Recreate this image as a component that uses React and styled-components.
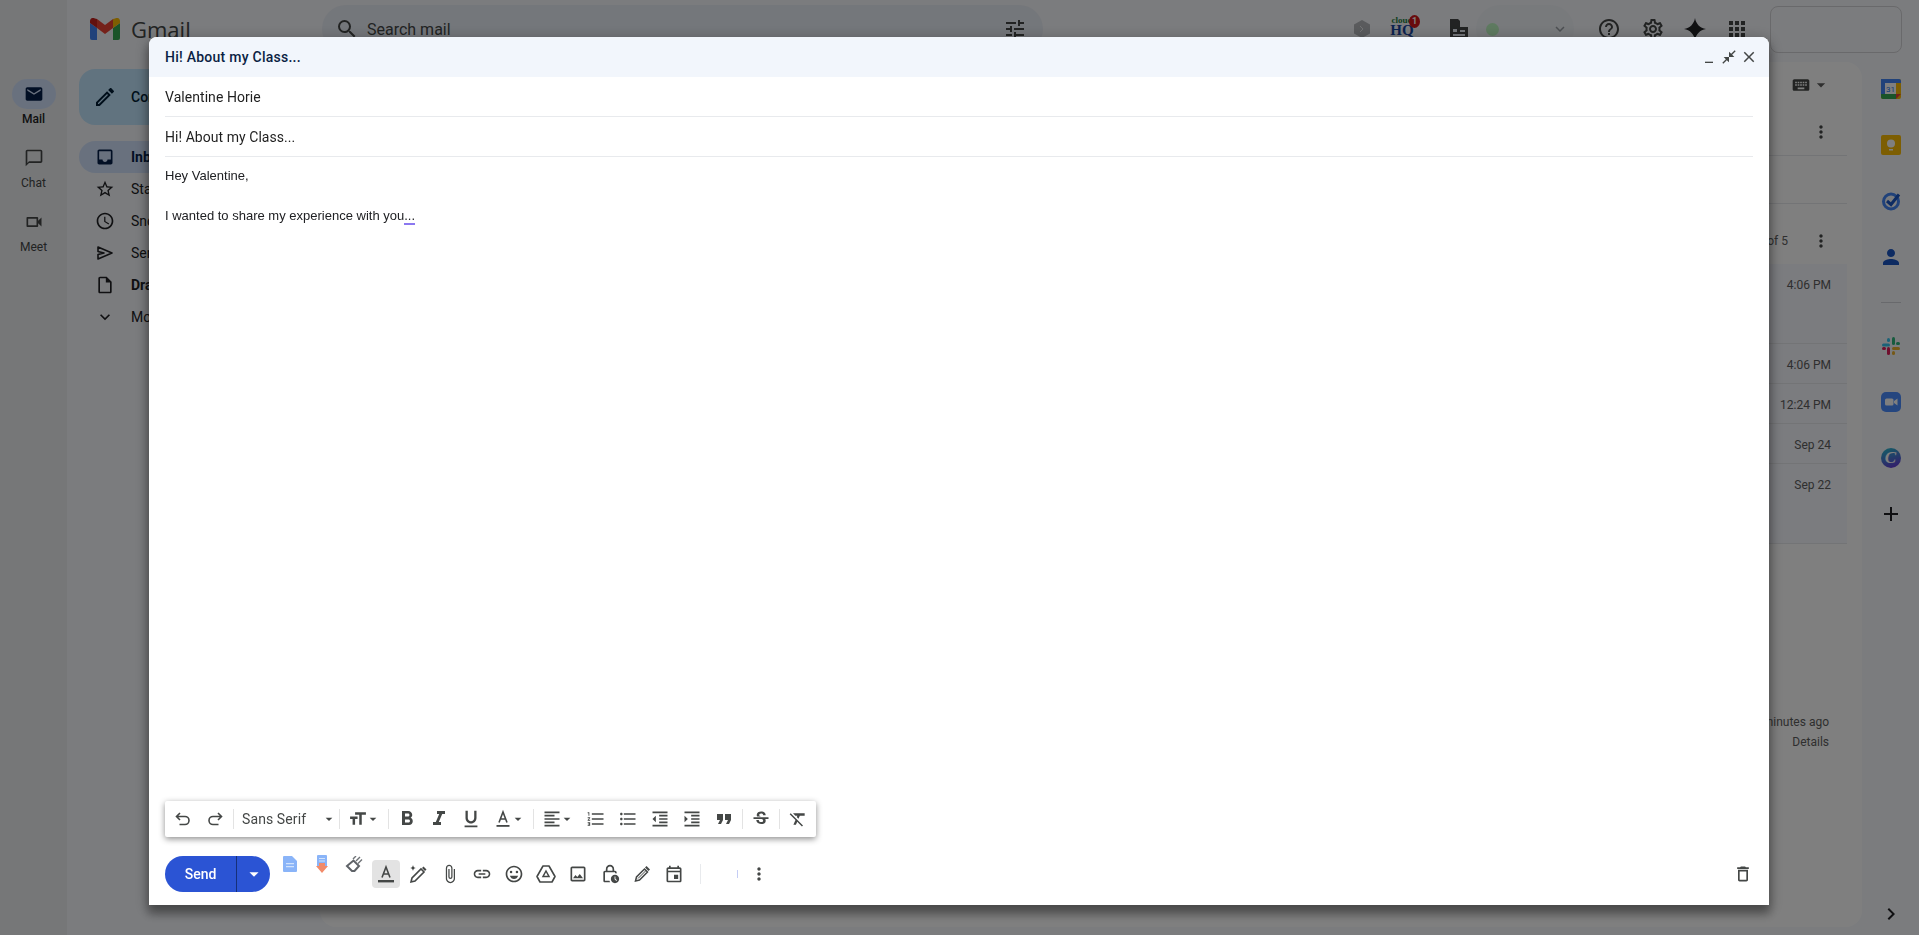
import React from 'react'
import styled, { createGlobalStyle } from 'styled-components'
import {
  MdAccessTime, MdAdd, MdApps, MdArrowDropDown, MdAttachFile, MdChatBubbleOutline, MdChevronRight, MdClose,
  MdCloseFullscreen, MdExpandMore, MdFormatBold, MdFormatClear, MdFormatAlignLeft,
  MdFormatIndentDecrease, MdFormatIndentIncrease, MdFormatItalic, MdFormatListBulleted, MdFormatListNumbered,
  MdFormatQuote, MdFormatUnderlined, MdHelpOutline, MdInbox, MdKeyboard, MdLink, MdMail,
  MdMinimize, MdMoreVert, MdOutlineCreate, MdOutlineDelete, MdOutlineEmojiEmotions, MdOutlineEvent,
  MdOutlineImage, MdOutlineInsertDriveFile, MdOutlineLockClock, MdOutlineSettings,
  MdOutlineVideocam, MdPerson, MdSearch, MdStarBorder, MdStrikethroughS, MdTextFields, MdTune,
} from 'react-icons/md'

const GlobalStyle = createGlobalStyle`
  html, body { margin: 0; padding: 0; height: 100%; overflow: hidden; }
  body { background: #f6f8fc; font-family: Roboto, "Noto Sans", sans-serif; color: #1f1f1f; }
  * { box-sizing: border-box; }
`

const Page = styled.div`
  width: 100%;
  height: 935px;
  display: flex;
  overflow: hidden;
`

/* left rail */
const Rail = styled.nav`
  flex: 0 0 67px;
  background: #eceef1;
  display: flex;
  flex-direction: column;
  align-items: center;
  padding-top: 79px;
`
const RailItem = styled.div`
  height: 64px;
  display: flex;
  flex-direction: column;
  align-items: center;
  font-size: 12px;
  font-weight: ${p => (p.$active ? 500 : 400)};
  color: ${p => (p.$active ? '#1f1f1f' : '#444746')};
`
const RailIcon = styled.div`
  width: 44px;
  height: 30px;
  border-radius: 15px;
  display: flex;
  align-items: center;
  justify-content: center;
  margin-bottom: 3px;
  font-size: 20px;
  background: ${p => (p.$active ? '#d3e3fd' : 'transparent')};
  color: ${p => (p.$active ? '#041e49' : '#444746')};
`

const Main = styled.div`
  flex: 1;
  min-width: 0;
  display: flex;
  flex-direction: column;
`

/* top bar */
const TopBar = styled.header`
  flex: 0 0 58px;
  display: flex;
  align-items: center;
`
const Brand = styled.div`
  flex: 0 0 255px;
  padding-left: 23px;
  display: flex;
  align-items: center;
  gap: 11px;
  font: 400 22px "Open Sans", sans-serif;
  color: #444746;
`
const SearchBar = styled.div`
  flex: 0 0 721px;
  height: 48px;
  border-radius: 24px;
  background: #e9eef6;
  display: flex;
  align-items: center;
  padding: 0 16px 0 13px;
  gap: 8px;
  font-size: 16px;
  color: #444746;
`
const SearchText = styled.span`
  flex: 1;
`
const TopSlot = styled.div`
  flex: 0 0 ${p => p.$w || 24}px;
  margin-left: ${p => p.$ml || 0}px;
  display: flex;
  align-items: center;
  justify-content: center;
  font-size: 24px;
  color: #444746;
`
const CloudLogo = styled.div`
  position: relative;
  width: 40px;
  height: 26px;
  font-family: "Liberation Serif", serif;
  font-weight: 700;
  text-align: center;
  line-height: 1;
`
const CloudWord = styled.div`
  font-size: 9px;
  color: #1c7c3a;
`
const CloudHq = styled.div`
  font-size: 15px;
  color: #1846a0;
  margin-top: -2px;
`
const CloudBadge = styled.span`
  position: absolute;
  top: -1px;
  right: 2px;
  width: 11px;
  height: 13px;
  border-radius: 50%;
  background: #d3171a;
  color: #fff;
  font: 700 9px/13px Roboto, sans-serif;
`
const StatusPill = styled.div`
  flex: 0 0 98px;
  margin-left: 5px;
  height: 48px;
  border-radius: 24px;
  background: #f1f4f9;
  display: flex;
  align-items: center;
  justify-content: space-between;
  padding: 0 5px 0 10px;
  color: #9aa0a6;
  font-size: 18px;
`
const StatusDot = styled.span`
  width: 13px;
  height: 13px;
  border-radius: 50%;
  background: #bdf5c0;
`
const AccountBox = styled.div`
  flex: 0 0 132px;
  height: 47px;
  margin-left: 21px;
  border: 1px solid #d3d3d6;
  border-radius: 8px;
`

/* content below the top bar */
const Content = styled.div`
  flex: 1;
  min-height: 0;
  display: flex;
`
const SideNav = styled.aside`
  flex: 0 0 253px;
  padding: 11px 12px 0;
`
const Compose = styled.div`
  width: 142px;
  height: 56px;
  border-radius: 16px;
  background: #c2e7ff;
  display: flex;
  align-items: center;
  padding-left: 14px;
  gap: 14px;
  font-size: 14px;
  font-weight: 500;
  margin-bottom: 16px;
  color: #001d35;
`
const NavRow = styled.div`
  height: 32px;
  border-radius: 16px;
  display: flex;
  align-items: center;
  padding-left: 16px;
  gap: 16px;
  font-size: 14px;
  font-weight: ${p => (p.$bold ? 700 : 400)};
  background: ${p => (p.$active ? '#d3e3fd' : 'transparent')};
  color: ${p => (p.$active ? '#041e49' : '#202124')};
`
const MailCard = styled.section`
  flex: 1;
  min-width: 0;
  margin: 4px 0 8px;
  background: #fff;
  border-radius: 16px;
  display: flex;
  flex-direction: column;
  padding-right: 15px;
`
const CardRow = styled.div`
  height: ${p => p.$h}px;
  flex: 0 0 ${p => p.$h}px;
  display: flex;
  justify-content: flex-end;
  align-items: ${p => (p.$top ? 'flex-start' : 'center')};
  padding: ${p => p.$pt || 0}px 16px 0 0;
  font-size: 12px;
  line-height: 20px;
  color: #5e5e5e;
  background: ${p => (p.$read ? '#f6f8ff' : 'transparent')};
  border-bottom: ${p => (p.$line ? '1px solid #e7e8ec' : '0')};
`
const RowDots = styled(MdMoreVert)`
  font-size: 20px;
  color: #444746;
  margin-left: 23px;
`
const KeyboardIcon = styled(MdKeyboard)`
  font-size: 20px;
  color: #444746;
`
const CardFooter = styled.div`
  margin-top: 168px;
  padding-right: 18px;
  text-align: right;
  font-size: 12px;
  line-height: 20px;
  color: #5e5e5e;
`

/* right add-on strip */
const SidePanel = styled.aside`
  flex: 0 0 57px;
  padding: 3px 0 9px;
  display: flex;
  flex-direction: column;
  align-items: center;
`
const PanelSlot = styled.div`
  flex: 0 0 56px;
  display: flex;
  align-items: center;
  justify-content: center;
  font-size: 24px;
  color: #202124;
`
const PanelRule = styled.div`
  width: 20px;
  height: 1px;
  margin: 17px 0 15px;
  background: #d0d3d8;
`
const PanelExpand = styled.div`
  margin-top: auto;
  font-size: 24px;
  line-height: 0;
  color: #202124;
`
const CanvaBadge = styled.div`
  width: 20px;
  height: 20px;
  border-radius: 50%;
  background: linear-gradient(160deg, #25c3cc, #6c2bd9);
  color: #fff;
  font: italic 700 17px/20px "Liberation Serif", serif;
  text-align: center;
`

/* dim layer and compose dialog */
const Scrim = styled.div`
  position: fixed;
  inset: 0;
  background: rgba(0, 0, 0, 0.5);
`
const Dialog = styled.div`
  position: absolute;
  left: 149px;
  top: 37px;
  width: 1620px;
  height: 868px;
  background: #fff;
  border-radius: 8px 8px 0 0;
  box-shadow: 0 8px 10px 1px rgba(0, 0, 0, 0.3), 0 3px 14px 2px rgba(0, 0, 0, 0.24);
  display: flex;
  flex-direction: column;
`
const DialogHeader = styled.div`
  flex: 0 0 40px;
  background: #f2f6fc;
  border-radius: 8px 8px 0 0;
  display: flex;
  align-items: center;
  padding: 0 10px 0 16px;
  font-size: 14px;
  font-weight: 500;
  letter-spacing: 0.25px;
  color: #0b1f44;
`
const HeaderTitle = styled.div`
  flex: 1;
`
const HeaderButton = styled.div`
  width: 20px;
  height: 20px;
  display: flex;
  align-items: center;
  justify-content: center;
  font-size: 16px;
  color: #444746;
`
const FieldRow = styled.div`
  flex: 0 0 40px;
  margin: 0 16px;
  display: flex;
  align-items: center;
  font-size: 14px;
  letter-spacing: 0.05px;
  color: #1f1f1f;
  border-bottom: 1px solid #e8eaed;
`
const MessageBody = styled.div`
  flex: 1;
  padding: 9px 16px 0;
  font: 13px/20px "Liberation Sans", Arial, sans-serif;
  color: #202124;
`
const SpellMark = styled.span`
  border-bottom: 2px solid #8b78f0;
`

const FormatBar = styled.div`
  align-self: flex-start;
  margin-left: 16px;
  width: 651px;
  height: 36px;
  padding: 0 2px;
  background: #fff;
  border-radius: 2px;
  box-shadow: 0 2px 6px rgba(0, 0, 0, 0.45);
  display: flex;
  align-items: center;
`
const FormatSep = styled.div`
  flex: 0 0 1px;
  height: 20px;
  margin: 0 2px;
  background: #e3e3e3;
`
const ToolButton = styled.div`
  flex: 0 0 32px;
  height: 32px;
  display: flex;
  align-items: center;
  justify-content: center;
  font-size: ${p => p.$size || 20}px;
  color: #444746;
`
const MenuButton = styled.div`
  flex: 0 0 44px;
  height: 32px;
  padding-left: 6px;
  display: flex;
  align-items: center;
  font-size: 20px;
  color: #444746;
`
const FontButton = styled(MenuButton)`
  flex: 0 0 101px;
  justify-content: space-between;
  padding-right: 3px;
  font-size: 14px;
  letter-spacing: 0.1px;
`
const Caret = styled(MdArrowDropDown)`
  flex: 0 0 16px;
  font-size: 22px;
  margin: 0 -3px;
`
const SizeIcon = styled(MdTextFields)`
  transform: scaleX(-1);
`

const ActionRow = styled.div`
  flex: 0 0 36px;
  margin: 19px 10px 13px 16px;
  display: flex;
  align-items: center;
`
const SendGroup = styled.div`
  flex: 0 0 105px;
  height: 36px;
  margin-right: 4px;
  display: flex;
  border-radius: 18px;
  overflow: hidden;
  background: #2b54d4;
  color: #fff;
`
const SendLabel = styled.div`
  flex: 0 0 72px;
  display: flex;
  align-items: center;
  justify-content: center;
  font-size: 14px;
  font-weight: 500;
  border-right: 1px solid #16307a;
`
const SendMenu = styled.div`
  flex: 1;
  display: flex;
  align-items: center;
  justify-content: center;
  font-size: 22px;
`
const ActionSlot = styled.div`
  flex: 0 0 32px;
  height: 32px;
  display: flex;
  align-items: center;
  justify-content: center;
  font-size: 20px;
  color: #444746;
`
const ExtensionSlot = styled(ActionSlot)`
  align-self: flex-start;
  height: 16px;
`
const ColorToggle = styled.div`
  width: 28px;
  height: 28px;
  border-radius: 4px;
  background: #e3e3e3;
  display: flex;
  align-items: center;
  justify-content: center;
`
const ActionSep = styled.div`
  flex: 0 0 1px;
  height: 20px;
  margin: 0 36px 0 10px;
  background: #e8eaed;
`
const FaintMark = styled.div`
  flex: 0 0 1px;
  height: 8px;
  margin-right: 5px;
  background: #c5cdf5;
`
const TrashSlot = styled(ActionSlot)`
  margin-left: auto;
`

const GmailLogo = () => (
  <svg width="30" height="22" viewBox="0 0 30 22">
    <path d="M2 22h5V10L0 5v15a2 2 0 0 0 2 2z" fill="#4285f4" />
    <path d="M23 22h5a2 2 0 0 0 2-2V5l-7 5z" fill="#34a853" />
    <path d="M23 1v9l7-5V3c0-2.6-3-4-5-2.4z" fill="#fbbc04" />
    <path d="M7 10V1l8 6 8-6v9l-8 6z" fill="#ea4335" />
    <path d="M0 3v2l7 5V1L5 .6C3-1 0 .4 0 3z" fill="#c5221f" />
  </svg>
)
const HexIcon = () => (
  <svg width="16" height="18" viewBox="0 0 16 18">
    <path d="M8 0l8 4.500v9L8 18l-8-4.500v-9z" fill="#b4b7bb" />
    <path d="M6 6l3 3-3 3" fill="none" stroke="#e6e8ea" strokeWidth="1" />
  </svg>
)
const DocTableIcon = () => (
  <svg width="18" height="20" viewBox="0 0 18 20">
    <path d="M0 0h8l2 2v6h8v12H0z" fill="#444746" />
    <path d="M3 10h4v3H3zM10 11h5v2h-5zM3 15h12v2H3z" fill="#e9eef6" />
  </svg>
)
const SparkIcon = () => (
  <svg width="22" height="22" viewBox="0 0 22 22">
    <path d="M11 0c1 6 5 10 11 11-6 1-10 5-11 11-1-6-5-10-11-11 6-1 10-5 11-11z" fill="#202124" />
  </svg>
)
const CalendarLogo = () => (
  <svg width="20" height="20" viewBox="0 0 20 20">
    <rect width="20" height="20" rx="2" fill="#fbbc04" />
    <rect x="0" y="0" width="15" height="15" fill="#fff" />
    <path d="M0 15h15v5H2a2 2 0 0 1-2-2z" fill="#34a853" />
    <path d="M0 0h18a2 2 0 0 1 2 2v2H4v11H0z" fill="#4285f4" />
    <path d="M15 20v-5h5z" fill="#ea4335" />
    <text x="9.5" y="13" fontSize="8" textAnchor="middle" fontFamily="Roboto, sans-serif" fill="#1a73e8">31</text>
  </svg>
)
const KeepLogo = () => (
  <svg width="20" height="20" viewBox="0 0 20 20">
    <rect width="20" height="20" rx="2" fill="#fbbc04" />
    <circle cx="10" cy="8.5" r="4" fill="#fff" />
    <rect x="8" y="14" width="4" height="1.5" fill="#fff" />
  </svg>
)
const TasksLogo = () => (
  <svg width="20" height="20" viewBox="0 0 20 20">
    <circle cx="10" cy="10.5" r="7.5" fill="none" stroke="#4285f4" strokeWidth="3" />
    <path d="M6 10l4 3.500L18 3.500" fill="none" stroke="#1a56c4" strokeWidth="3" />
  </svg>
)
const SlackLogo = () => (
  <svg width="18" height="18" viewBox="0 0 18 18">
    <rect x="0" y="6.5" width="8" height="3" rx="1.5" fill="#36c5f0" />
    <rect x="5" y="1" width="3" height="4" rx="1.5" fill="#36c5f0" />
    <rect x="10" y="0" width="3" height="8" rx="1.5" fill="#2eb67d" />
    <rect x="14" y="5" width="4" height="3" rx="1.5" fill="#2eb67d" />
    <rect x="10" y="10" width="8" height="3" rx="1.5" fill="#ecb22e" />
    <rect x="10" y="14" width="3" height="4" rx="1.5" fill="#ecb22e" />
    <rect x="5" y="10" width="3" height="8" rx="1.5" fill="#e01e5a" />
    <rect x="0" y="10" width="4" height="3" rx="1.5" fill="#e01e5a" />
  </svg>
)
const ZoomLogo = () => (
  <svg width="20" height="20" viewBox="0 0 20 20">
    <rect width="20" height="20" rx="5" fill="#4a8cff" />
    <rect x="4" y="6.5" width="8.5" height="7" rx="1.5" fill="#fff" />
    <path d="M13 9l3.500-2.500v7L13 11z" fill="#fff" />
  </svg>
)
const SentIcon = () => (
  <svg width="20" height="20" viewBox="0 0 20 20">
    <path d="M3 4l14 6-14 6v-4.500L9 10 3 8.500z" fill="none" stroke="currentColor" strokeWidth="1.6" strokeLinejoin="round" />
  </svg>
)
const UndoIcon = ({ flip }) => (
  <svg width="20" height="20" viewBox="0 0 20 20" style={flip ? { transform: 'scaleX(-1)' } : undefined}>
    <path d="M7 4L3.500 7.500 7 11M3.500 7.500H12a4 4 0 0 1 0 8H6.500" fill="none" stroke="currentColor" strokeWidth="1.6" />
  </svg>
)
const ColorAIcon = ({ bar = 13, thick = 1.8 }) => (
  <svg width="20" height="20" viewBox="0 0 20 20">
    <path d="M6 13.500L10 3l4 10.500M7.300 10h5.400" fill="none" stroke="currentColor" strokeWidth="1.6" />
    <rect x={10 - bar / 2} y="16" width={bar} height={thick} fill="currentColor" />
  </svg>
)
const DocExtIcon = () => (
  <svg width="14" height="16" viewBox="0 0 14 16">
    <path d="M1 0h8l5 5v10a1 1 0 0 1-1 1H1a1 1 0 0 1-1-1V1a1 1 0 0 1 1-1z" fill="#8ab4f8" />
    <path d="M3 7h8v1.300H3zM3 10h8v1.300H3z" fill="#d2e3fc" />
  </svg>
)
const DocArrowIcon = () => (
  <svg width="12" height="18" viewBox="0 0 12 18">
    <path d="M2 0h8a1 1 0 0 1 1 1v10H1V1a1 1 0 0 1 1-1z" fill="#8ab4f8" />
    <path d="M3 3h6v1H3zM3 5.500h6v1H3z" fill="#d2e3fc" />
    <path d="M3 8h6v3h3l-6 7-6-7h3z" fill="#f28b6a" />
  </svg>
)
const EraserIcon = () => (
  <svg width="18" height="17" viewBox="0 0 18 17">
    <path d="M2 10l6.500-5.500L14 10l-4.500 5H7z" fill="none" stroke="#5f6368" strokeWidth="2" />
    <path d="M8 3l3-3M11 5l4-4M13 7.500l4-4" stroke="#6f7377" strokeWidth="1.4" />
  </svg>
)
const MagicPenIcon = () => (
  <svg width="20" height="20" viewBox="0 0 20 20">
    <path d="M3 18l1-4L13 5l3 3-9 9z" fill="none" stroke="#444746" strokeWidth="1.6" />
    <path d="M14 4l1.500-1.500 3 3L17 7z" fill="#444746" />
    <path d="M5 1c.4 2 1 2.600 3 3-2 .4-2.600 1-3 3-.4-2-1-2.600-3-3 2-.4 2.600-1 3-3z" fill="#444746" />
  </svg>
)
const SignaturePenIcon = () => (
  <svg width="20" height="20" viewBox="0 0 20 20">
    <path d="M3.500 17l1-4L12.500 5l3 3-8 8z" fill="none" stroke="#444746" strokeWidth="1.5" />
    <path d="M6 14.500L14 6.500" stroke="#444746" strokeWidth="1" />
    <path d="M13 3.500l1.500-1.500 3.500 3.500L16.500 7z" fill="#444746" />
  </svg>
)
const DriveIcon = () => (
  <svg width="20" height="18" viewBox="0 0 20 18">
    <path d="M7 1h6l6 10.500-3 5.500H4l-3-5.500z" fill="none" stroke="#444746" strokeWidth="1.6" strokeLinejoin="round" />
    <path d="M10 6l3 5.500H7z" fill="none" stroke="#444746" strokeWidth="1.5" />
  </svg>
)

const formatTail = [MdFormatListNumbered, MdFormatListBulleted, MdFormatIndentDecrease, MdFormatIndentIncrease]
const sideLogos = [CalendarLogo, KeepLogo, TasksLogo]
const navItems = [
  { icon: MdInbox, label: 'Inbox', active: true, bold: true },
  { icon: MdStarBorder, label: 'Starred' },
  { icon: MdAccessTime, label: 'Snoozed' },
  { icon: SentIcon, label: 'Sent' },
  { icon: MdOutlineInsertDriveFile, label: 'Drafts', bold: true },
  { icon: MdExpandMore, label: 'More' },
]
const mailRows = [
  { h: 80, time: '4:06 PM' },
  { h: 40, time: '4:06 PM' },
  { h: 40, time: '12:24 PM' },
  { h: 40, time: 'Sep 24' },
  { h: 80, time: 'Sep 22' },
]
const actionIcons = [MdAttachFile, MdLink, MdOutlineEmojiEmotions, DriveIcon, MdOutlineImage, MdOutlineLockClock, SignaturePenIcon, MdOutlineEvent]

export default function App() {
  return (
    <>
      <GlobalStyle />
      <Page>
        <Rail>
          <RailItem $active><RailIcon $active><MdMail /></RailIcon>Mail</RailItem>
          <RailItem><RailIcon><MdChatBubbleOutline /></RailIcon>Chat</RailItem>
          <RailItem><RailIcon><MdOutlineVideocam /></RailIcon>Meet</RailItem>
        </Rail>
        <Main>
          <TopBar>
            <Brand><GmailLogo />Gmail</Brand>
            <SearchBar>
              <MdSearch size={24} />
              <SearchText>Search mail</SearchText>
              <MdTune size={24} />
            </SearchBar>
            <TopSlot $ml={307}><HexIcon /></TopSlot>
            <TopSlot $w={40} $ml={8}>
              <CloudLogo>
                <CloudWord>cloud</CloudWord>
                <CloudHq>HQ</CloudHq>
                <CloudBadge>1</CloudBadge>
              </CloudLogo>
            </TopSlot>
            <TopSlot $ml={25}><DocTableIcon /></TopSlot>
            <StatusPill><StatusDot /><MdExpandMore /></StatusPill>
            <TopSlot $ml={23}><MdHelpOutline /></TopSlot>
            <TopSlot $ml={20}><MdOutlineSettings /></TopSlot>
            <TopSlot $ml={18}><SparkIcon /></TopSlot>
            <TopSlot $ml={18}><MdApps /></TopSlot>
            <AccountBox />
          </TopBar>
          <Content>
            <SideNav>
              <Compose><MdOutlineCreate size={24} />Compose</Compose>
              {navItems.map(({ icon: Icon, label, active, bold }) => (
                <NavRow key={label} $active={active} $bold={bold}><Icon size={20} />{label}</NavRow>
              ))}
            </SideNav>
            <MailCard>
              <CardRow $h={46}>
                <KeyboardIcon /><MdArrowDropDown size={20} />
              </CardRow>
              <CardRow $h={48} $line><RowDots /></CardRow>
              <CardRow $h={48} $line />
              <CardRow $h={60} $pt={27} $top>1–5 of 5<RowDots /></CardRow>
              {mailRows.map(row => (
                <CardRow key={row.time + row.h} $h={row.h} $pt={11} $top $read $line>{row.time}</CardRow>
              ))}
              <CardFooter>
                Last account activity: 3 minutes ago
                <br />
                Details
              </CardFooter>
            </MailCard>
            <SidePanel>
              {sideLogos.map((Logo, i) => <PanelSlot key={i}><Logo /></PanelSlot>)}
              <PanelSlot><MdPerson color="#1a56c4" /></PanelSlot>
              <PanelRule />
              <PanelSlot><SlackLogo /></PanelSlot>
              <PanelSlot><ZoomLogo /></PanelSlot>
              <PanelSlot><CanvaBadge>C</CanvaBadge></PanelSlot>
              <PanelSlot><MdAdd /></PanelSlot>
              <PanelExpand><MdChevronRight /></PanelExpand>
            </SidePanel>
          </Content>
        </Main>
      </Page>

      <Scrim>
        <Dialog>
          <DialogHeader>
            <HeaderTitle>Hi! About my Class...</HeaderTitle>
            <HeaderButton><MdMinimize /></HeaderButton>
            <HeaderButton><MdCloseFullscreen /></HeaderButton>
            <HeaderButton><MdClose size={18} /></HeaderButton>
          </DialogHeader>
          <FieldRow>Valentine Horie</FieldRow>
          <FieldRow>Hi! About my Class...</FieldRow>
          <MessageBody>
            Hey Valentine,
            <br />
            <br />
            I wanted to share my experience with you<SpellMark>...</SpellMark>
          </MessageBody>
          <FormatBar>
            <ToolButton><UndoIcon /></ToolButton>
            <ToolButton><UndoIcon flip /></ToolButton>
            <FormatSep />
            <FontButton>Sans Serif<Caret /></FontButton>
            <FormatSep />
            <MenuButton><SizeIcon /><Caret /></MenuButton>
            <FormatSep />
            <ToolButton $size={24}><MdFormatBold /></ToolButton>
            <ToolButton $size={24}><MdFormatItalic /></ToolButton>
            <ToolButton $size={22}><MdFormatUnderlined /></ToolButton>
            <MenuButton><ColorAIcon /><Caret /></MenuButton>
            <FormatSep />
            <MenuButton><MdFormatAlignLeft /><Caret /></MenuButton>
            {formatTail.map((Icon, i) => <ToolButton key={i}><Icon /></ToolButton>)}
            <ToolButton $size={24}><MdFormatQuote /></ToolButton>
            <FormatSep />
            <ToolButton><MdStrikethroughS /></ToolButton>
            <FormatSep />
            <ToolButton><MdFormatClear /></ToolButton>
          </FormatBar>
          <ActionRow>
            <SendGroup>
              <SendLabel>Send</SendLabel>
              <SendMenu><MdArrowDropDown /></SendMenu>
            </SendGroup>
            <ExtensionSlot><DocExtIcon /></ExtensionSlot>
            <ExtensionSlot><DocArrowIcon /></ExtensionSlot>
            <ExtensionSlot><EraserIcon /></ExtensionSlot>
            <ActionSlot><ColorToggle><ColorAIcon bar={16} thick={2.4} /></ColorToggle></ActionSlot>
            <ActionSlot><MagicPenIcon /></ActionSlot>
            {actionIcons.map((Icon, i) => <ActionSlot key={i}><Icon /></ActionSlot>)}
            <ActionSep />
            <FaintMark />
            <ActionSlot><MdMoreVert /></ActionSlot>
            <TrashSlot><MdOutlineDelete /></TrashSlot>
          </ActionRow>
        </Dialog>
      </Scrim>
    </>
  )
}
